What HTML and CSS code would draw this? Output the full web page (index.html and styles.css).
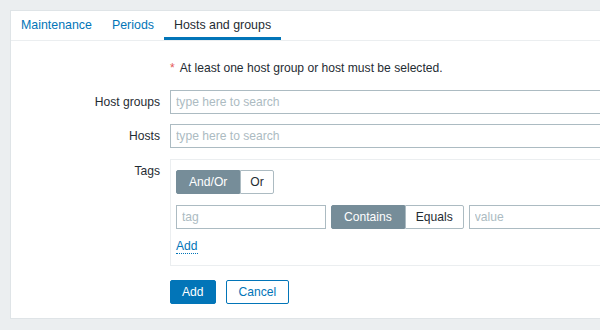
FILE: index.html
```html
<!DOCTYPE html>
<html>
<head>
    <link rel="stylesheet" href="styles.css">
</head>
<body>
    <div class="panel">
        <ul class="tabs">
            <li class="tab">Maintenance</li>
            <li class="tab">Periods</li>
            <li class="tab active">Hosts and groups</li>
        </ul>

        <form class="form-grid">
            <div class="label"></div>
            <div class="field required-note"><span class="asterisk">*</span> At least one host group or host must be selected.</div>

            <label class="label">Host groups</label>
            <div class="field"><input class="multiselect" type="text" placeholder="type here to search"></div>

            <label class="label">Hosts</label>
            <div class="field"><input class="multiselect" type="text" placeholder="type here to search"></div>

            <label class="label label-top">Tags</label>
            <div class="field">
                <div class="tags-box">
                    <div class="segmented">
                        <span class="seg selected">And/Or</span>
                        <span class="seg narrow">Or</span>
                    </div>
                    <div class="tag-row">
                        <input class="tag-input" type="text" placeholder="tag">
                        <div class="segmented">
                            <span class="seg selected">Contains</span>
                            <span class="seg">Equals</span>
                        </div>
                        <input class="value-input" type="text" placeholder="value">
                    </div>
                    <a class="link-add">Add</a>
                </div>
            </div>

            <div class="label"></div>
            <div class="field buttons">
                <button type="button" class="btn-primary">Add</button>
                <button type="button" class="btn-alt">Cancel</button>
            </div>
        </form>
    </div>
</body>
</html>
```

FILE: styles.css
```css
body {
    margin: 0;
    padding: 10px;
    background-color: #ebeef0;
    font-family: "Liberation Sans", Arial, sans-serif;
    font-size: 12.1px;
    color: #1f2c33;
    overflow: hidden;
}

.panel {
    width: 640px;
    background-color: #ffffff;
    border: 1px solid #dfe4e7;
    padding-bottom: 14px;
}

.tabs {
    list-style: none;
    margin: 0;
    padding: 0;
    display: flex;
    border-bottom: 1px solid #ebeef0;
}

.tab {
    padding: 0 10px;
    height: 26px;
    line-height: 29px;
    font-size: 12.4px;
    border-bottom: 3px solid transparent;
    color: #0275b8;
}

.tab.active {
    color: #1f2c33;
    border-bottom-color: #0275b8;
}

.form-grid {
    display: grid;
    grid-template-columns: 149px 1fr;
    column-gap: 10px;
    row-gap: 10px;
    margin-top: 15px;
}

.label {
    text-align: right;
    line-height: 24px;
}

.label-top {
    margin-top: 1px;
}

.field {
    display: flex;
    align-items: center;
}

.required-note {
    height: 24px;
}

.asterisk {
    color: #e45959;
    margin-right: 5px;
}

input {
    font-family: inherit;
    font-size: 12.1px;
    color: #1f2c33;
    height: 24px;
    box-sizing: border-box;
    border: 1px solid #acbbc2;
    padding: 0 5px;
    margin: 0;
    background: #ffffff;
    outline: none;
}

input::placeholder {
    color: #acbbc2;
}

.multiselect {
    width: 460px;
}

.tags-box {
    width: 460px;
    border: 1px solid #ebeef0;
    padding: 10px 5px 11px;
    margin-top: 1px;
}

.segmented {
    display: inline-flex;
}

.seg {
    height: 24px;
    line-height: 22px;
    box-sizing: border-box;
    padding: 0 10px;
    border: 1px solid #acbbc2;
    background: #ffffff;
    color: #1f2c33;
}

.seg.narrow {
    padding: 0 9px;
}

.seg.selected {
    background: #768d99;
    border-color: #768d99;
    color: #ffffff;
    padding: 0 12px;
}

.seg:first-child {
    border-radius: 2px 0 0 2px;
}

.seg:last-child {
    border-radius: 0 2px 2px 0;
}

.tag-row {
    display: flex;
    gap: 5px;
    margin-top: 11px;
}

.tag-input {
    width: 150px;
}

.value-input {
    width: 150px;
}

.link-add {
    display: inline-block;
    margin-top: 10px;
    color: #0275b8;
    border-bottom: 1px dotted #0275b8;
    line-height: 14px;
}

.buttons {
    gap: 10px;
    margin-top: 4px;
}

button {
    font-family: inherit;
    font-size: 12.1px;
    height: 24px;
    border-radius: 2px;
    padding: 0 11px;
    cursor: pointer;
}

.btn-primary {
    background: #0275b8;
    border: 1px solid #0275b8;
    color: #ffffff;
}

.btn-alt {
    background: #ffffff;
    border: 1px solid #0275b8;
    color: #0275b8;
    padding: 0 12px;
}
```
